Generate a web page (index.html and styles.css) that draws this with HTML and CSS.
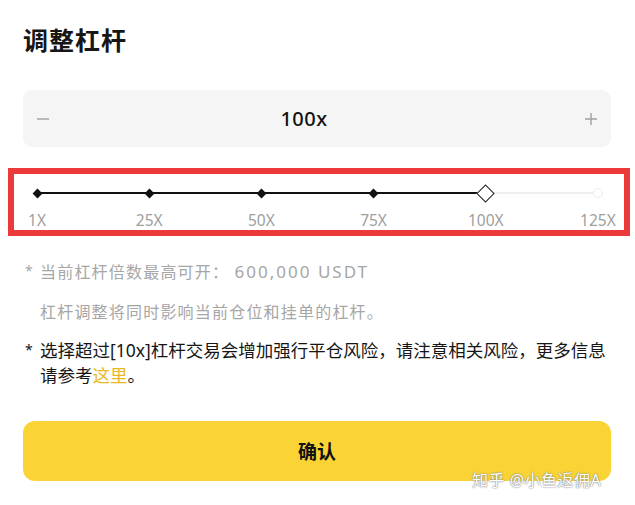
FILE: index.html
```html
<!DOCTYPE html>
<html lang="zh-CN">
<head>
  <meta charset="UTF-8">
  <title>调整杠杆</title>
  <meta name="viewport" content="width=device-width, initial-scale=1.0">
  <link rel="stylesheet" href="styles.css">
</head>
<body>

  <div class="sheet">
    <h1>调整杠杆</h1>

    <div class="stepper">
      <svg class="step-btn" width="12" height="12" viewBox="0 0 12 12"><path d="M0 6h12" /></svg>
      <span class="value">100x</span>
      <svg class="step-btn" width="12" height="12" viewBox="0 0 12 12"><path d="M0 6h12M6 0v12" /></svg>
    </div>

    <div class="slider-box">
      <div class="track">
        <div class="line"></div>
        <div class="mark"><span class="dot"></span><span class="label">1X</span></div>
        <div class="mark"><span class="dot"></span><span class="label">25X</span></div>
        <div class="mark"><span class="dot"></span><span class="label">50X</span></div>
        <div class="mark"><span class="dot"></span><span class="label">75X</span></div>
        <div class="mark"><span class="dot current"></span><span class="label">100X</span></div>
        <div class="mark"><span class="dot off"></span><span class="label">125X</span></div>
      </div>
    </div>

    <div class="notes">
      <div class="note muted">
        <span class="star">*</span>
        <p>当前杠杆倍数最高可开： <span class="num">600,000 USDT</span></p>
      </div>
      <div class="note muted">
        <span class="star"></span>
        <p>杠杆调整将同时影响当前仓位和挂单的杠杆。</p>
      </div>
      <div class="note warn">
        <span class="star">*</span>
        <p>选择超过[10x]杠杆交易会增加强行平仓风险，请注意相关风险，更多信息<br>请参考<a href="#">这里</a>。</p>
      </div>
    </div>

    <button>确认</button>
  </div>

  <div class="watermark">知乎 @小鱼返佣A</div>

</body>
</html>
```

FILE: styles.css
```css
:root {
  --text: #161616;
  --muted: #a6a6a6;
  --yellow: #fad434;
  --red: #ec3a3c;
}

body {
  margin: 0;
  background: #fff;
  color: var(--text);
  font-family: "Noto Sans", "Noto Sans CJK SC", sans-serif;
}

.sheet {
  padding: 0 24px 0 23px;
}

h1 {
  margin: 23px 0 0;
  font-size: 25px;
  line-height: 34px;
  font-weight: 700;
  letter-spacing: 1px;
}

.stepper {
  margin-top: 33px;
  height: 57px;
  background: #f5f5f5;
  border-radius: 9px;
  display: flex;
  align-items: center;
  justify-content: space-between;
  padding: 0 14px;
}

.step-btn path {
  stroke: #a0a0a0;
  stroke-width: 1.4;
  fill: none;
}

.value {
  margin-right: 26px;
  font-size: 20px;
  font-weight: 500;
  letter-spacing: 0.5px;
  color: #111;
}

/* slider area, framed in red */
.slider-box {
  margin: 21px -19px 0 -15px;
  border: 6px solid var(--red);
  padding: 0 6px 0 3px;
}

.track {
  position: relative;
  display: flex;
  justify-content: space-between;
  padding-top: 10px;
}

.line {
  position: absolute;
  left: 20px;
  right: 20px;
  top: 18px;
  height: 1.5px;
  background: linear-gradient(to right, #111 80%, #eeeeee 80%);
}

.mark {
  width: 40px;
  display: flex;
  flex-direction: column;
  align-items: center;
  position: relative;
}

.dot {
  height: 18px;
  display: flex;
  align-items: center;
  justify-content: center;
}

.dot::before {
  content: "";
  width: 7px;
  height: 7px;
  background: #111;
  transform: rotate(45deg);
}

.dot.current::before {
  width: 11px;
  height: 11px;
  background: #fff;
  border: 1.5px solid #222;
}

.dot.off::before {
  width: 8px;
  height: 8px;
  background: #fff;
  border: 1px solid #ececec;
  border-radius: 50%;
  transform: none;
}

.label {
  margin-top: 8px;
  font-size: 15.5px;
  line-height: 20px;
  color: #9e9e9e;
}

.notes {
  margin-top: 24px;
}

.note {
  display: flex;
}

.note .star {
  width: 15px;
  flex-shrink: 0;
  font-size: 14px;
  line-height: 22px;
  padding-left: 2px;
}

.note p {
  margin: 0;
  white-space: nowrap;
}

.muted {
  color: var(--muted);
  font-size: 16px;
  letter-spacing: 1.2px;
  line-height: 24px;
}

.muted .num {
  font-size: 17px;
  letter-spacing: 2px;
}

.muted + .muted {
  margin-top: 16px;
}

.warn {
  margin-top: 14px;
  font-size: 17.5px;
  line-height: 25px;
  letter-spacing: 0;
  color: var(--text);
}

.warn .star {
  line-height: 24px;
}

.warn a {
  color: #e9b824;
  text-decoration: none;
}

button {
  display: block;
  width: 100%;
  height: 60px;
  margin-top: 33px;
  border: none;
  border-radius: 12px;
  background: var(--yellow);
  font-family: inherit;
  font-size: 19px;
  font-weight: 700;
  color: #111;
  cursor: pointer;
}

.watermark {
  position: absolute;
  left: 472px;
  top: 468px;
  font-size: 16px;
  line-height: 24px;
  color: #fff;
  text-shadow: 0 0 1px #777, 0 0 2px #888;
  letter-spacing: 0.5px;
}
```
